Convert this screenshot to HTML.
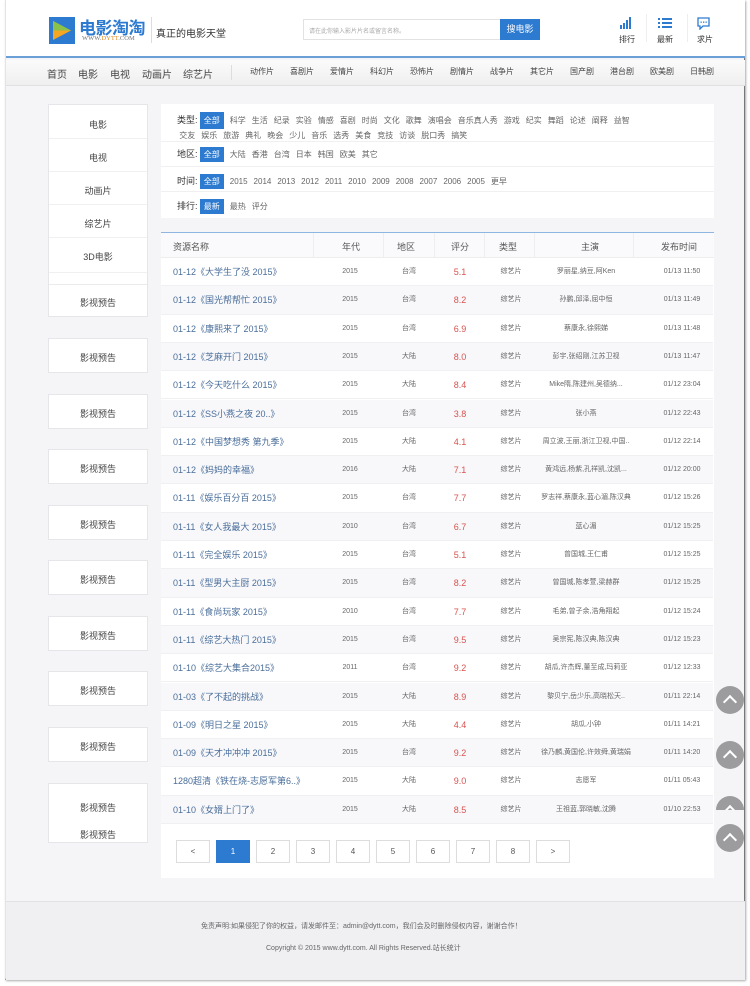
<!DOCTYPE html>
<html><head><meta charset="utf-8"><style>
*{margin:0;padding:0;box-sizing:border-box}
body{width:750px;height:986px;background:#fff;font-family:"Liberation Sans","Noto Sans CJK SC",sans-serif;position:relative;overflow:hidden;color:#555}
.frame{position:absolute;left:5px;top:0;width:740px;height:980px;background:#f5f4f7;border-right:1px solid #777;border-bottom:2px solid #888;border-left:1px solid #e4e4e4;box-shadow:1px 1px 2px #aaa}
.abs{position:absolute}
.hdr{position:absolute;left:0;top:0;width:739px;height:58px;background:#fff;border-bottom:2px solid #6a9fd8}
.nav{position:absolute;left:0;top:60px;width:739px;height:26px;background:linear-gradient(#fbfbfb,#efefef);border-bottom:1px solid #e0e0e0;font-size:10px;color:#444}
.nav span{position:absolute;top:6px}
.side{position:absolute;left:42px;width:100px;background:#fff;border:1px solid #e6e6ea;font-size:9px;color:#444;text-align:center}
.panel{position:absolute;background:#fff}
.f{font-size:8px;color:#666;position:absolute}
.f b{font-weight:normal;display:inline-block;margin-right:6px}
.on{background:#2d7ad1;color:#fff;padding:2px 4px}
.lbl{font-size:9px;color:#333}
.row{position:absolute;left:0;width:552px;height:28.3px;font-size:7px;color:#666;border-bottom:1px solid #f0f0f3}
.row span{position:absolute;top:0;line-height:28px;transform:translateX(-50%);white-space:nowrap}
.row .n{left:12px;transform:none;font-size:9px;color:#4a6e9a}
.row .s{color:#d9534f;font-size:9px}
.pg{position:absolute;top:840px;width:34px;height:23px;background:#fff;border:1px solid #ddd;font-size:8px;text-align:center;line-height:22px;color:#555}
.circ{position:absolute;left:716px;width:28px;height:28px;border-radius:50%;background:#9c9c9e}
.circ:after{content:"";position:absolute;left:9px;top:11px;width:8px;height:8px;border-left:2px solid #fff;border-top:2px solid #fff;transform:rotate(45deg)}
</style></head><body>
<div class="frame">
<div class="hdr">
 <svg class="abs" style="left:43px;top:17px" width="28" height="27"><rect x="0" y="0" width="26" height="27" fill="#2d7ad1"/><polygon points="4,4 22,13.5 4,23" fill="#f5a623"/><polygon points="4,4 22,13.5 4,13.5" fill="#8bc34a"/></svg>
 <div class="abs" style="left:73px;top:14px;font-size:17px;font-weight:bold;color:#2d7ad1;letter-spacing:-0.5px">电影淘淘</div>
 <div class="abs" style="left:76px;top:35px;font-size:6.5px;color:#777;font-family:'Liberation Serif',serif">WWW.<span style="color:#e08a1e">DYTT</span>.COM</div>
 <div class="abs" style="left:145px;top:17px;width:1px;height:26px;background:#ddd"></div>
 <div class="abs" style="left:150px;top:25px;font-size:10px;color:#333">真正的电影天堂</div>
 <div class="abs" style="left:297px;top:19px;width:198px;height:21px;border:1px solid #e2e2e2;font-size:6px;color:#aaa;padding:6px 5px">请在此你输入影片片名或留言名称。</div>
 <div class="abs" style="left:494px;top:19px;width:40px;height:21px;background:#2d7ad1;color:#fff;font-size:9px;text-align:center;line-height:21px">搜电影</div>
 <svg class="abs" style="left:613px;top:17px" width="14" height="12"><rect x="1" y="8" width="2" height="4" fill="#2d7ad1"/><rect x="4" y="6" width="2" height="6" fill="#2d7ad1"/><rect x="7" y="3" width="2" height="9" fill="#2d7ad1"/><rect x="10" y="0" width="2" height="12" fill="#2d7ad1"/></svg>
 <div class="abs" style="left:613px;top:34px;font-size:8px;color:#333">排行</div>
 <svg class="abs" style="left:652px;top:17px" width="14" height="12"><g fill="#2d7ad1"><rect x="0" y="1" width="2" height="2"/><rect x="4" y="1" width="10" height="2"/><rect x="0" y="5" width="2" height="2"/><rect x="4" y="5" width="10" height="2"/><rect x="0" y="9" width="2" height="2"/><rect x="4" y="9" width="10" height="2"/></g></svg>
 <div class="abs" style="left:651px;top:34px;font-size:8px;color:#333">最新</div>
 <div class="abs" style="left:681px;top:14px;width:1px;height:28px;background:#eee"></div>
 <div class="abs" style="left:640px;top:14px;width:1px;height:28px;background:#eee"></div>
 <svg class="abs" style="left:691px;top:17px" width="13" height="13"><path d="M1 1h11v8H6l-3 3V9H1z" fill="none" stroke="#2d7ad1" stroke-width="1.3"/><g fill="#2d7ad1"><rect x="3.5" y="4.5" width="1.3" height="1.3"/><rect x="6" y="4.5" width="1.3" height="1.3"/><rect x="8.5" y="4.5" width="1.3" height="1.3"/></g></svg>
 <div class="abs" style="left:691px;top:34px;font-size:8px;color:#333">求片</div>
</div>
<div class="nav">
 <span style="left:41px">首页</span><span style="left:72px">电影</span><span style="left:104px">电视</span><span style="left:136px">动画片</span><span style="left:177px">综艺片</span>
 <span style="left:225px;top:5px;width:1px;height:15px;background:#ddd"></span>
 <span style="left:244px;font-size:8px">动作片</span><span style="left:284px;font-size:8px">喜剧片</span><span style="left:324px;font-size:8px">爱情片</span><span style="left:364px;font-size:8px">科幻片</span><span style="left:404px;font-size:8px">恐怖片</span><span style="left:444px;font-size:8px">剧情片</span><span style="left:484px;font-size:8px">战争片</span><span style="left:524px;font-size:8px">其它片</span><span style="left:564px;font-size:8px">国产剧</span><span style="left:604px;font-size:8px">港台剧</span><span style="left:644px;font-size:8px">欧美剧</span><span style="left:684px;font-size:8px">日韩剧</span>
</div>

<div class="side" style="top:104px;height:213px">
 <div style="position:absolute;top:13px;width:100%">电影</div>
 <div style="position:absolute;top:33px;width:100%;border-top:1px solid #f0f0f0"></div>
 <div style="position:absolute;top:46px;width:100%">电视</div>
 <div style="position:absolute;top:66px;width:100%;border-top:1px solid #f0f0f0"></div>
 <div style="position:absolute;top:79px;width:100%">动画片</div>
 <div style="position:absolute;top:99px;width:100%;border-top:1px solid #f0f0f0"></div>
 <div style="position:absolute;top:112px;width:100%">综艺片</div>
 <div style="position:absolute;top:132px;width:100%;border-top:1px solid #f0f0f0"></div>
 <div style="position:absolute;top:145px;width:100%">3D电影</div>
 <div style="position:absolute;top:167px;width:100%;border-top:1px solid #f0f0f0"></div>
 <div style="position:absolute;top:179px;width:100%;border-top:1px solid #ebebeb"></div>
 <div style="position:absolute;top:191px;width:100%">影视预告</div>
</div>
<div class="side" style="top:338px;height:35px;padding-top:12px">影视预告</div>
<div class="side" style="top:394px;height:35px;padding-top:12px">影视预告</div>
<div class="side" style="top:449px;height:35px;padding-top:12px">影视预告</div>
<div class="side" style="top:505px;height:35px;padding-top:12px">影视预告</div>
<div class="side" style="top:560px;height:35px;padding-top:12px">影视预告</div>
<div class="side" style="top:616px;height:35px;padding-top:12px">影视预告</div>
<div class="side" style="top:671px;height:35px;padding-top:12px">影视预告</div>
<div class="side" style="top:727px;height:35px;padding-top:12px">影视预告</div>
<div class="side" style="top:783px;height:60px;padding-top:11px;line-height:27px">影视预告<br>影视预告</div>

<div class="panel" style="left:155px;top:104px;width:553px;height:114px">
 <div class="f" style="left:16px;top:8px;line-height:13px;width:520px"><span class="lbl">类型:</span> <b class="on">全部</b><b>科学</b><b>生活</b><b>纪录</b><b>实验</b><b>情感</b><b>喜剧</b><b>时尚</b><b>文化</b><b>歌舞</b><b>演唱会</b><b>音乐真人秀</b><b>游戏</b><b>纪实</b><b>舞蹈</b><b>论述</b><b>阐释</b><b>益智</b><br>&nbsp;<b>交友</b><b>娱乐</b><b>旅游</b><b>典礼</b><b>晚会</b><b>少儿</b><b>音乐</b><b>选秀</b><b>美食</b><b>竞技</b><b>访谈</b><b>脱口秀</b><b>搞笑</b></div>
 <div class="abs" style="left:0;top:37px;width:553px;border-top:1px solid #f0f0f0"></div>
 <div class="f" style="left:16px;top:43px"><span class="lbl">地区:</span> <b class="on">全部</b><b>大陆</b><b>香港</b><b>台湾</b><b>日本</b><b>韩国</b><b>欧美</b><b>其它</b></div>
 <div class="abs" style="left:0;top:62px;width:553px;border-top:1px solid #f0f0f0"></div>
 <div class="f" style="left:16px;top:70px"><span class="lbl">时间:</span> <b class="on">全部</b><b>2015</b><b>2014</b><b>2013</b><b>2012</b><b>2011</b><b>2010</b><b>2009</b><b>2008</b><b>2007</b><b>2006</b><b>2005</b><b>更早</b></div>
 <div class="abs" style="left:0;top:87px;width:553px;border-top:1px solid #f0f0f0"></div>
 <div class="f" style="left:16px;top:95px"><span class="lbl">排行:</span> <b class="on">最新</b><b>最热</b><b>评分</b></div>
</div>

<div class="panel" style="left:155px;top:232px;width:553px;height:646px;border-top:1px solid #8fb6e0">
 <div class="abs" style="left:0;top:0;width:553px;height:25px;background:#fafafc;border-bottom:1px solid #eee;font-size:9px;color:#555">
  <span class="abs" style="left:12px;top:7px">资源名称</span>
  <span class="abs" style="left:181px;top:7px">年代</span>
  <span class="abs" style="left:236px;top:7px">地区</span>
  <span class="abs" style="left:290px;top:7px">评分</span>
  <span class="abs" style="left:338px;top:7px">类型</span>
  <span class="abs" style="left:420px;top:7px">主演</span>
  <span class="abs" style="left:500px;top:7px">发布时间</span>
  <span class="abs" style="left:152px;top:0;width:1px;height:25px;background:#eee"></span>
  <span class="abs" style="left:222px;top:0;width:1px;height:25px;background:#eee"></span>
  <span class="abs" style="left:273px;top:0;width:1px;height:25px;background:#eee"></span>
  <span class="abs" style="left:323px;top:0;width:1px;height:25px;background:#eee"></span>
  <span class="abs" style="left:373px;top:0;width:1px;height:25px;background:#eee"></span>
  <span class="abs" style="left:472px;top:0;width:1px;height:25px;background:#eee"></span>
 </div>
 <div id="rows"></div>
</div>
<div class="pg" style="left:170px">&lt;</div>
<div class="pg" style="left:210px;background:#2d7ad1;color:#fff;border-color:#2d7ad1">1</div>
<div class="pg" style="left:250px">2</div>
<div class="pg" style="left:290px">3</div>
<div class="pg" style="left:330px">4</div>
<div class="pg" style="left:370px">5</div>
<div class="pg" style="left:410px">6</div>
<div class="pg" style="left:450px">7</div>
<div class="pg" style="left:490px">8</div>
<div class="pg" style="left:530px">&gt;</div>

<div class="abs" style="left:0;top:901px;width:739px;height:79px;background:#f0eff2;border-top:1px solid #e2e2e4;font-size:7px;color:#666;text-align:center">
 <div style="position:absolute;left:195px;top:19px">免责声明:如果侵犯了你的权益，请发邮件至：admin@dytt.com，我们会及时删除侵权内容，谢谢合作！</div>
 <div style="position:absolute;left:260px;top:41px">Copyright © 2015 www.dytt.com. All Rights Reserved.站长统计</div>
</div>
</div>
<div class="circ" style="top:686px"></div>
<div class="circ" style="top:741px"></div>
<div class="circ" style="top:796px;clip-path:inset(0 0 50% 0)"></div>
<div class="circ" style="top:824px"></div>
<script>
var d=[["01-12《大学生了没 2015》","2015","台湾","5.1","罗丽星,纳豆,阿Ken","01/13 11:50"],
["01-12《国光帮帮忙 2015》","2015","台湾","8.2","孙鹏,邱泽,屈中恒","01/13 11:49"],
["01-12《康熙来了 2015》","2015","台湾","6.9","蔡康永,徐熙娣","01/13 11:48"],
["01-12《芝麻开门 2015》","2015","大陆","8.0","彭宇,张绍刚,江苏卫视","01/13 11:47"],
["01-12《今天吃什么 2015》","2015","大陆","8.4","Mike隋,陈建州,吴德纳...","01/12 23:04"],
["01-12《SS小燕之夜 20..》","2015","台湾","3.8","张小燕","01/12 22:43"],
["01-12《中国梦想秀 第九季》","2015","大陆","4.1","周立波,王丽,浙江卫视,中国..","01/12 22:14"],
["01-12《妈妈的幸福》","2016","大陆","7.1","黄鸿远,杨紫,孔祥凯,沈凯...","01/12 20:00"],
["01-11《娱乐百分百 2015》","2015","台湾","7.7","罗志祥,蔡康永,蓝心湄,陈汉典","01/12 15:26"],
["01-11《女人我最大 2015》","2010","台湾","6.7","蓝心湄","01/12 15:25"],
["01-11《完全娱乐 2015》","2015","台湾","5.1","曾国城,王仁甫","01/12 15:25"],
["01-11《型男大主厨 2015》","2015","台湾","8.2","曾国城,陈孝萱,梁赫群","01/12 15:25"],
["01-11《食尚玩家 2015》","2010","台湾","7.7","毛弟,曾子余,浩角翔起","01/12 15:24"],
["01-11《综艺大热门 2015》","2015","台湾","9.5","吴宗宪,陈汉典,陈汉典","01/12 15:23"],
["01-10《综艺大集合2015》","2011","台湾","9.2","胡瓜,许杰辉,董至成,玛莉亚","01/12 12:33"],
["01-03《了不起的挑战》","2015","大陆","8.9","黎贝宁,岳少乐,高晓松天..","01/11 22:14"],
["01-09《明日之星 2015》","2015","大陆","4.4","胡瓜,小钟","01/11 14:21"],
["01-09《天才冲冲冲 2015》","2015","台湾","9.2","徐乃麟,黄国伦,许效舜,黄瑞娟","01/11 14:20"],
["1280超清《铁在烧-志愿军第6..》","2015","大陆","9.0","志愿军","01/11 05:43"],
["01-10《女婿上门了》","2015","大陆","8.5","王祖蓝,郭晓敏,沈腾","01/10 22:53"]];
var h="";d.forEach(function(r,i){h+='<div class="row" style="top:'+(25+i*28.3)+'px;background:'+(i%2?'#f8f8fb':'#fff')+'"><span class="n">'+r[0]+'</span><span style="left:189px">'+r[1]+'</span><span style="left:248px">'+r[2]+'</span><span class="s" style="left:299px">'+r[3]+'</span><span style="left:350px">综艺片</span><span style="left:425px">'+r[4]+'</span><span style="left:521px">'+r[5]+'</span></div>'});
document.getElementById("rows").innerHTML=h;
</script>
</body></html>
